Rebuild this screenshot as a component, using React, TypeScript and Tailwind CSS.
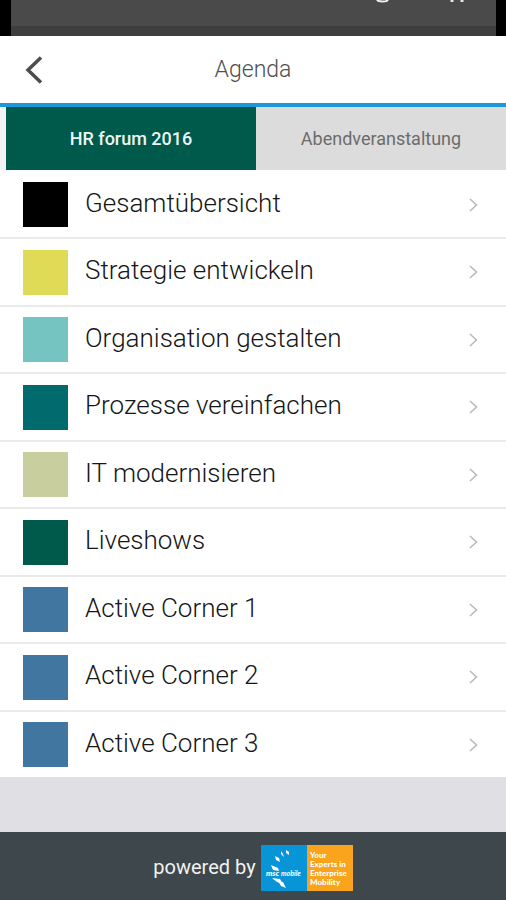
import React from "react";

const sessions = [
  { title: "Gesamtübersicht", color: "bg-black" },
  { title: "Strategie entwickeln", color: "bg-[#e0db56]" },
  { title: "Organisation gestalten", color: "bg-[#76c4c1]" },
  { title: "Prozesse vereinfachen", color: "bg-[#006a6c]" },
  { title: "IT modernisieren", color: "bg-[#c8ce9e]" },
  { title: "Liveshows", color: "bg-[#005a4b]" },
  { title: "Active Corner 1", color: "bg-[#4076a0]" },
  { title: "Active Corner 2", color: "bg-[#4076a0]" },
  { title: "Active Corner 3", color: "bg-[#4076a0]" },
];

function TopBar() {
  return (
    <div className="h-9 bg-black pl-[11px] pr-[10px]">
      <div className="flex h-full justify-end border-b-[10px] border-[#3e3e3e] bg-[#4a4a4a] pr-[30px]">
        <svg className="h-1 w-[90px]" viewBox="0 0 90 4" fill="none" aria-hidden="true">
          <path d="M1 0 Q2 1.5 6.500 1.500 Q11 1.500 12 0" stroke="#f0f0f0" strokeWidth="2" />
          <path d="M76 0v2M86 0v2" stroke="#e6e6e6" strokeWidth="3" />
        </svg>
      </div>
    </div>
  );
}

function Header() {
  return (
    <header className="grid h-[71px] grid-cols-[48px_1fr_48px] items-center border-b-4 border-[#1b98d8] bg-white">
      <button type="button" aria-label="Zurück" className="flex h-full items-center justify-end pr-[5px]">
        <svg className="h-7 w-[18px]" viewBox="0 0 18 28" fill="none" stroke="#4c4c4c" strokeWidth="3.5" aria-hidden="true">
          <path d="M16 1.500 L3 14 L16 26.500" />
        </svg>
      </button>
      <h1 className="text-center text-[23px] leading-7 font-light text-[#4f4f4f]">Agenda</h1>
    </header>
  );
}

function Tabs() {
  return (
    <nav className="flex h-[63px] bg-[#f2f2f2] pl-1.5 text-lg">
      <button type="button" className="flex-1 bg-[#005a4b] font-medium text-[#eef5f3]">
        HR forum 2016
      </button>
      <button type="button" className="flex-1 bg-[#dcdcdc] text-[#6c6c6c]">
        Abendveranstaltung
      </button>
    </nav>
  );
}

function SponsorLogo() {
  return (
    <svg className="h-[46px] w-[92px]" viewBox="0 0 92 46" fontFamily="Lato, sans-serif" role="img" aria-label="msc mobile">
      <rect width="46" height="46" fill="#0795d8" />
      <rect x="46" width="46" height="46" fill="#faa31c" />
      <g fill="#ffffff">
        <path d="M25 5l3 2v3l-3-2zM20 6l2 3 1 3-3-3zM14 11l4 2 1 4-4-2zM10 20l7 3 1 3-6-1zM11 33l8 1 3 5-6-2zM17 36l5 1 3 6-5-2z" />
        <text x="5" y="31" fontSize="8" fontWeight="900" fontStyle="italic">msc</text>
        <text x="20" y="31" fontSize="7" fontWeight="700" fontStyle="italic">mobile</text>
        <g fontSize="8" fontWeight="900">
          <text x="49" y="13">Your</text>
          <text x="49" y="22">Experts in</text>
          <text x="49" y="31">Enterprise</text>
          <text x="49" y="40">Mobility</text>
        </g>
      </g>
    </svg>
  );
}

export default function App() {
  return (
    <div className="flex min-h-screen flex-col bg-[#e0dfe4] font-[Roboto,sans-serif]">
      <TopBar />
      <Header />
      <Tabs />

      <main>
        <ul>
          {sessions.map((session) => (
            <li key={session.title} className="border-t-2 border-[#ebebeb] bg-white first:border-white odd:h-[67px] even:h-[68px]">
              <a href="#" className="flex h-full items-center pr-7 pl-[23px]">
                <span className={`size-[45px] shrink-0 ${session.color}`} />
                <span className="ml-[17px] flex-1 pb-1 text-[26px] leading-8 font-light text-[#161616]">{session.title}</span>
                <svg className="h-4 w-[9px]" viewBox="0 0 9 16" fill="none" stroke="#b8b8b8" strokeWidth="1.5" aria-hidden="true">
                  <path d="M1 2 L7.500 8 L1 14" />
                </svg>
              </a>
            </li>
          ))}
        </ul>
      </main>

      <footer className="mt-auto flex h-[68px] items-center justify-center gap-[5px] bg-[#3e474c] pt-1 text-xl text-[#f2f2f2]">
        <span className="pb-0.5">powered by</span>
        <SponsorLogo />
      </footer>
    </div>
  );
}
